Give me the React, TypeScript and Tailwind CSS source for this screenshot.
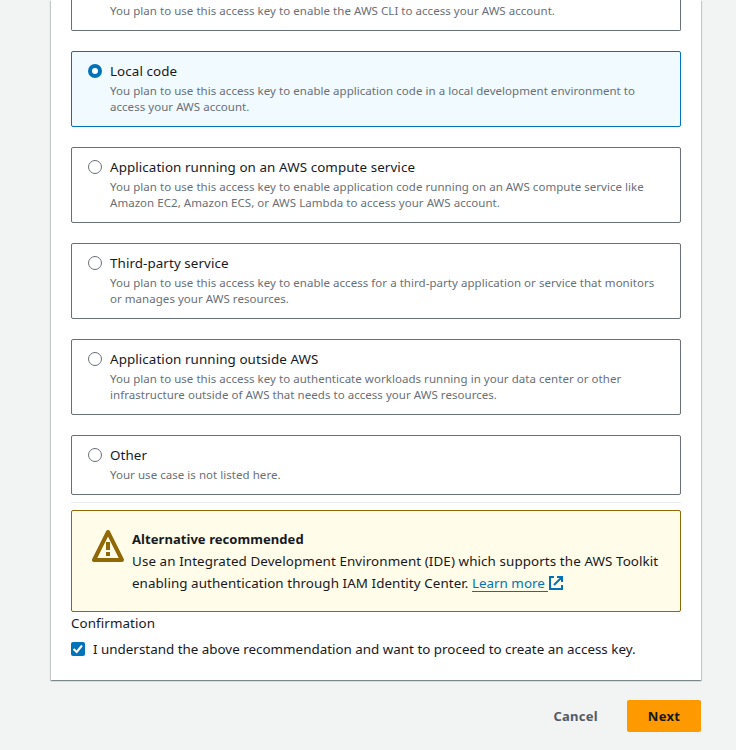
const options = [
  { title: "Local code", lines: ["You plan to use this access key to enable application code in a local development environment to", "access your AWS account."], selected: true },
  { title: "Application running on an AWS compute service", lines: ["You plan to use this access key to enable application code running on an AWS compute service like", "Amazon EC2, Amazon ECS, or AWS Lambda to access your AWS account."] },
  { title: "Third-party service", lines: ["You plan to use this access key to enable access for a third-party application or service that monitors", "or manages your AWS resources."] },
  { title: "Application running outside AWS", lines: ["You plan to use this access key to authenticate workloads running in your data center or other", "infrastructure outside of AWS that needs to access your AWS resources."] },
  { title: "Other", lines: ["Your use case is not listed here."] },
];

function Option({ title, lines, selected }: { title: string; lines: string[]; selected?: boolean }) {
  return (
    <label className={`flex rounded-[2px] border pt-[8px] pr-4 pb-[11px] pl-4 ${selected ? "border-[#0073bb] bg-[#f1faff]" : "border-[#687078] bg-white"}`}>
      <svg className="mt-1 mr-2 h-[14px] w-[14px] shrink-0" viewBox="0 0 14 14">
        {selected ? (
          <circle cx="7" cy="7" r="5" fill="white" stroke="#0073bb" strokeWidth="4" />
        ) : (
          <circle cx="7" cy="7" r="6.5" fill="white" stroke="#687078" strokeWidth="1" />
        )}
      </svg>
      <div>
        <div className="mb-px text-[13.4px] leading-[22px] tracking-[0.08px] whitespace-nowrap text-[#16191f]">{title}</div>
        {lines.map((line) => (
          <div key={line} className="text-[11.5px] leading-4 tracking-[0.04px] whitespace-nowrap text-[#687078]">{line}</div>
        ))}
      </div>
    </label>
  );
}

export default function App() {
  return (
    <div className="h-[750px] w-[736px] overflow-hidden bg-[#f2f3f3] font-['Noto_Sans',sans-serif] text-[13.4px] text-[#16191f]">
      <main className="ml-[51px] h-[680px] w-[650px] bg-white px-5 shadow-[0_1px_1px_0_rgba(0,28,36,0.3),1px_1px_1px_0_rgba(0,28,36,0.15),-1px_1px_1px_0_rgba(0,28,36,0.15)]">
        <div className="h-[31px] rounded-b-[2px] border border-t-0 border-[#687078] pt-[3px] pl-[38px] text-[11.5px] leading-4 tracking-[0.04px] whitespace-nowrap text-[#687078]">
          You plan to use this access key to enable the AWS CLI to access your AWS account.
        </div>
        <div className="mt-5 flex flex-col gap-5">
          {options.map((option) => <Option key={option.title} {...option} />)}
        </div>
        <div className="mt-[7px] h-[8px] border-t border-[#eaeded]" />
        <section className="flex h-[102px] rounded-[2px] border border-[#906806] bg-[#fffce9] pt-[17px] pl-5">
          <svg className="mt-[2px] mr-2 h-8 w-8 shrink-0" viewBox="0 0 32 32" fill="none" stroke="#906806" strokeWidth="4">
            <path d="M16 2 2 30h28L16 2Z" strokeLinejoin="round" />
            <path d="M16 12v8M16 22v4" />
          </svg>
          <div className="leading-[22px] whitespace-nowrap">
            <div className="text-[13px] font-bold tracking-[0.06px]">Alternative recommended</div>
            <div className="tracking-[0.09px]">Use an Integrated Development Environment (IDE) which supports the AWS Toolkit</div>
            <div className="flex">
              <span className="w-[340px] tracking-[0.07px]">enabling authentication through IAM Identity Center.</span>
              <a className="flex items-start text-[#0073bb]">
                <span className="h-[20px] w-[76px] border-b border-[#0073bb]">Learn more</span>
                <svg className="mt-1 ml-px h-[14px] w-[14px]" viewBox="0 0 14 14" fill="none" stroke="#0073bb" strokeWidth="2"><path d="M8 1h5v5M5 9l8-8M5 1H1v12h12V9" /></svg>
              </a>
            </div>
          </div>
        </section>
        <div className="leading-[22px] tracking-[0.08px]">Confirmation</div>
        <label className="mt-1 flex items-start leading-[22px] whitespace-nowrap">
          <svg className="mt-1 mr-2 h-[14px] w-[14px]" viewBox="0 0 14 14"><rect width="14" height="14" rx="2" fill="#0073bb" /><path d="m2.5 7 3.2 3 5.3-6.5" fill="none" stroke="white" strokeWidth="2" /></svg>
          I understand the above recommendation and want to proceed to create an access key.
        </label>
      </main>
      <footer className="mt-5 mr-[35px] flex justify-end text-[13px] font-bold tracking-[0.28px]">
        <button className="h-8 px-[29px] pt-px text-[#545b64]">Cancel</button>
        <button className="h-8 w-[74px] rounded-[2px] bg-[#ff9900] pt-px text-[#16191f]">Next</button>
      </footer>
    </div>
  );
}
